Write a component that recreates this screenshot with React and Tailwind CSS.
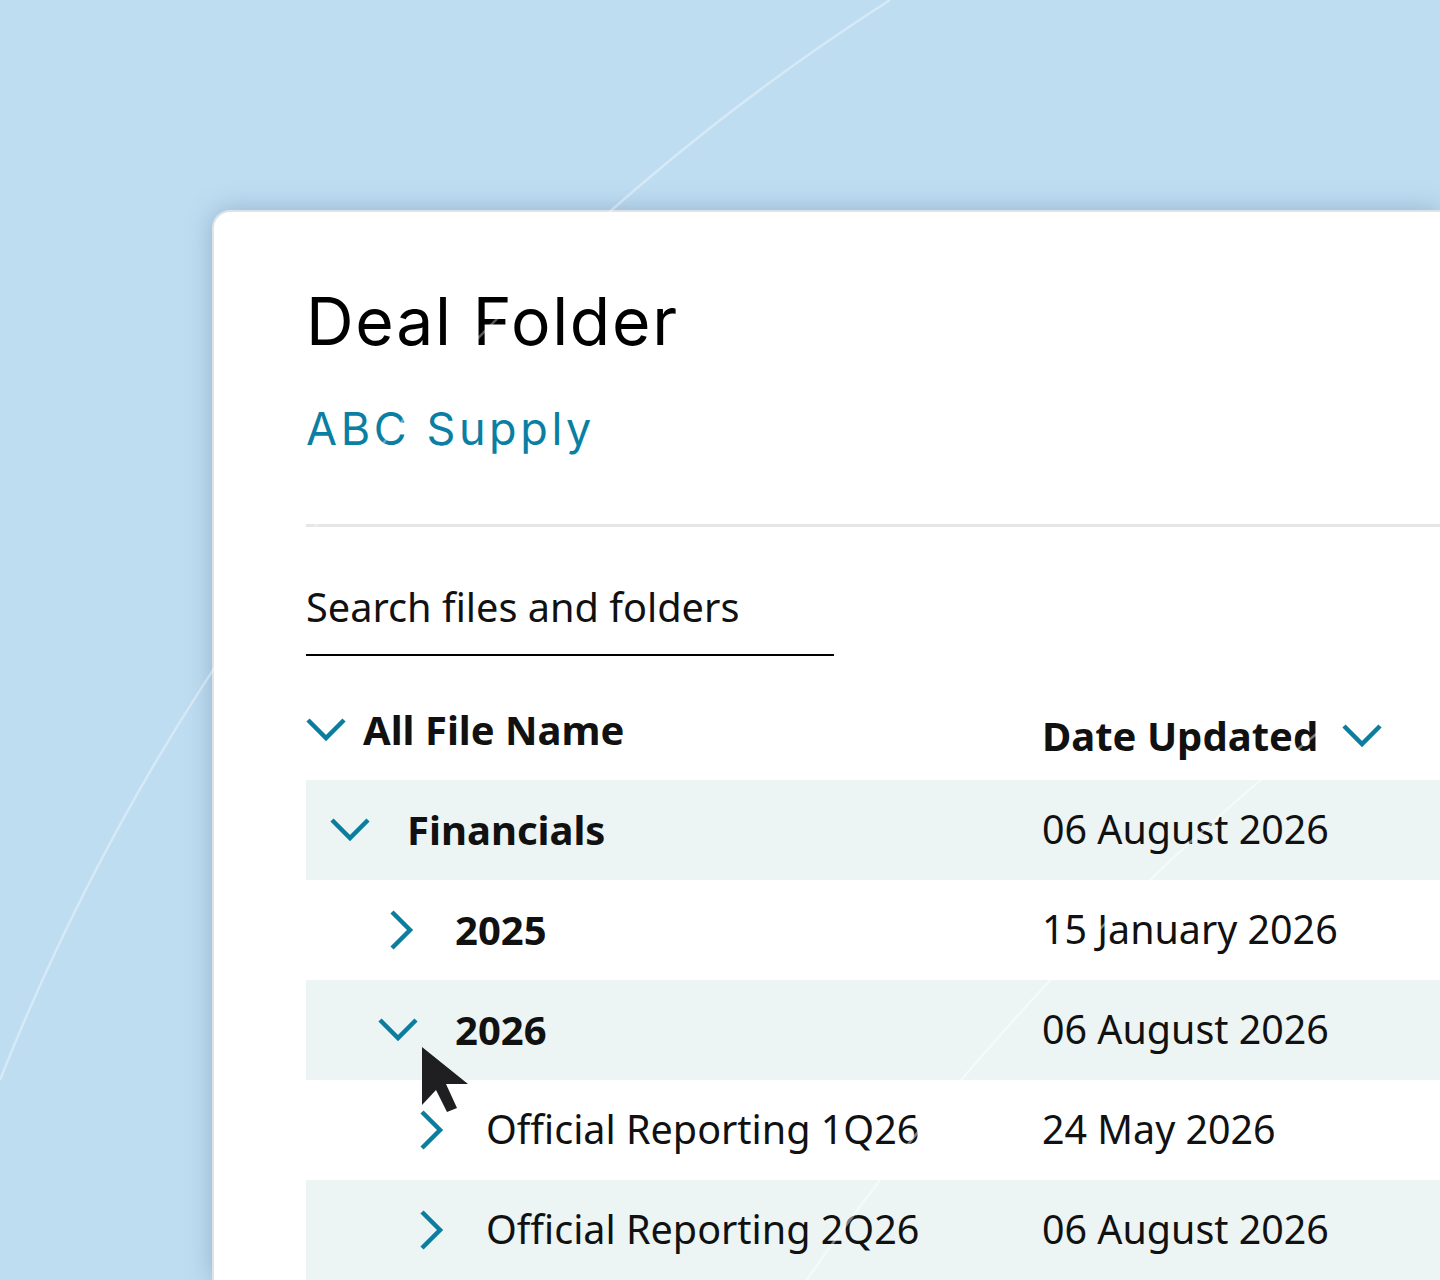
import React from "react";

const rows = [
  { name: "Financials", date: "06 August 2026", bold: true, open: true, pad: "pl-[24px]", gap: "ml-[37px]", shaded: true },
  { name: "2025", date: "15 January 2026", bold: true, open: false, pad: "pl-[84px]", gap: "ml-[41px]", shaded: false },
  { name: "2026", date: "06 August 2026", bold: true, open: true, pad: "pl-[72px]", gap: "ml-[37px]", shaded: true },
  { name: "Official Reporting 1Q26", date: "24 May 2026", bold: false, open: false, pad: "pl-[114px]", gap: "ml-[42px]", shaded: false },
  { name: "Official Reporting 2Q26", date: "06 August 2026", bold: false, open: false, pad: "pl-[114px]", gap: "ml-[42px]", shaded: true },
];

function ChevronDown() {
  return (
    <svg width="40" height="24" viewBox="0 0 40 24" className="shrink-0">
      <polyline points="2,2 20,20 38,2" fill="none" stroke="#0b7d9e" strokeWidth="4.5" />
    </svg>
  );
}

function ChevronRight() {
  return (
    <svg width="24" height="40" viewBox="0 0 24 40" className="shrink-0">
      <polyline points="2,2 20,20 2,38" fill="none" stroke="#0b7d9e" strokeWidth="4.5" />
    </svg>
  );
}

function Cursor() {
  return (
    <svg width="48" height="68" viewBox="0 0 48 68">
      <path d="M0 0 L0 58 L14 43 L25 65 L35 61 L24 37 L46 37 Z" fill="#1f1f22" />
    </svg>
  );
}

export default function App() {
  return (
    <div className="relative w-full h-[1280px] overflow-hidden bg-[#bfddf1] font-['Noto_Sans',sans-serif] text-[#111]">
      <div className="h-full pt-[210px] pl-[212px]">
        <div className="h-full bg-white rounded-tl-[18px] border-l-2 border-t-2 border-[#dde3e7] shadow-[0_0_26px_rgba(60,100,140,0.35)] pt-[76px] pl-[92px]">
          <h1 className="font-['Inter',sans-serif] text-[66px] leading-none font-normal tracking-[1.7px] text-black">
            Deal Folder
          </h1>
          <div className="mt-[52px] font-['Inter',sans-serif] text-[45px] leading-none tracking-[3.6px] text-[#0a7fa3]">
            ABC Supply
          </div>
          <div className="mt-[73px] h-[3px] bg-[#e6e6e6]" />

          <div className="mt-[61px] w-[528px] pb-[26px] border-b-2 border-black text-[39.7px] leading-none">
            Search files and folders
          </div>

          <div className="mt-[24px] h-[100px] flex items-center">
            <div className="w-[736px] flex items-center">
              <ChevronDown />
              <span className="ml-[17px] text-[40px] leading-none font-bold">All File Name</span>
            </div>
            <div className="flex items-center pt-[12px]">
              <span className="text-[40px] leading-none font-bold">Date Updated</span>
              <span className="ml-[24px]">
                <ChevronDown />
              </span>
            </div>
          </div>

          {rows.map((row) => (
            <div
              key={row.name}
              className={row.shaded ? "h-[100px] flex items-center bg-[#ecf4f4]" : "h-[100px] flex items-center bg-white"}
            >
              <div className={"w-[736px] flex items-center " + row.pad}>
                {row.open ? <ChevronDown /> : <ChevronRight />}
                <span className={row.gap + (row.bold ? " text-[40px] leading-none font-bold" : " text-[39.5px] leading-none")}>
                  {row.name}
                </span>
              </div>
              <div className="text-[39.4px] leading-none">{row.date}</div>
            </div>
          ))}
        </div>
      </div>

      {/* decorative arcs */}
      <svg className="absolute inset-0 pointer-events-none" width="1440" height="1280" viewBox="0 0 1440 1280">
        <path d="M890 0 A2286 2286 0 0 0 0 1080" fill="none" stroke="#ffffff" strokeOpacity="0.35" strokeWidth="2.5" />
        <path d="M1440 640 A2660 2660 0 0 0 740 1380" fill="none" stroke="#ffffff" strokeOpacity="0.45" strokeWidth="2.5" />
      </svg>

      <div className="absolute left-[422px] top-[1047px] pointer-events-none">
        <Cursor />
      </div>
    </div>
  );
}
